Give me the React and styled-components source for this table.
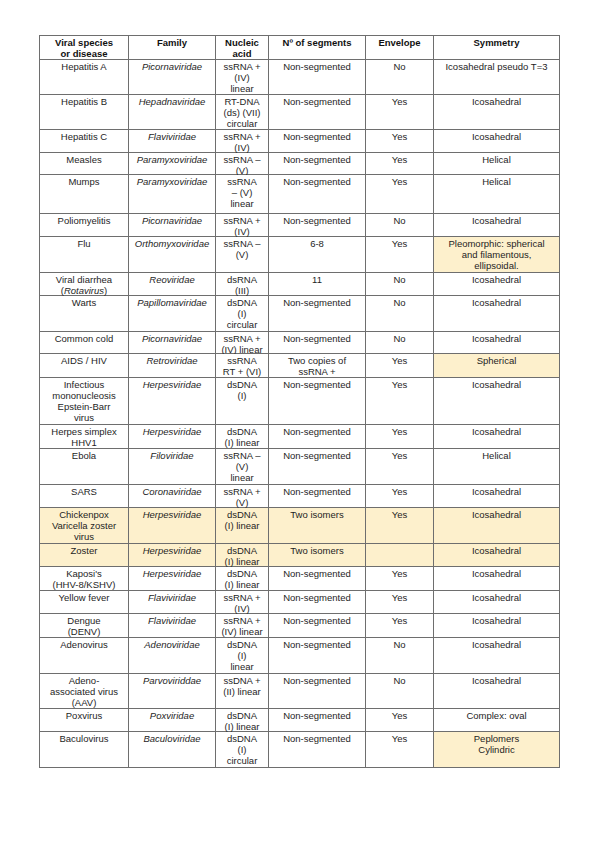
import React from "react";
import styled, { createGlobalStyle } from "styled-components";

const Global = createGlobalStyle`
  html, body { margin: 0; padding: 0; background: #ffffff; }
  body { font-family: "Liberation Sans", Arial, sans-serif; }
`;

const COLS = [89, 87, 53, 97, 68, 126];
const HEADER_H = 24;

const Page = styled.div`
  width: 599px;
  min-height: 848px;
  box-sizing: border-box;
  padding: 35px 0 0 39px;
  background: #ffffff;
`;

const Sheet = styled.div`
  display: grid;
  grid-template-columns: ${(p) => p.$cols};
  grid-template-rows: ${(p) => p.$rows};
  width: max-content;
  border-top: 1px solid #6e6e6e;
  border-left: 1px solid #6e6e6e;
`;

const Cell = styled.div`
  box-sizing: border-box;
  border-right: 1px solid #6e6e6e;
  border-bottom: 1px solid #6e6e6e;
  background: ${(p) => (p.$hl ? "#fdf0cc" : "#ffffff")};
  padding: 0.5px 1px 0;
  font-size: 9.5px;
  line-height: 11px;
  color: #1e1e1e;
  text-align: center;
  white-space: pre-line;
  overflow: visible;
  font-style: ${(p) => (p.$italic ? "italic" : "normal")};
`;

const HeadCell = styled(Cell)`
  font-weight: bold;
  color: #111111;
  padding-top: 1px;
`;

const Line = styled.div`
  display: block;
`;

const Em = styled.span`
  font-style: italic;
`;

const rows = [
  { h: 35, c: ["Hepatitis A", "Picornaviridae", "ssRNA +\n(IV)\nlinear", "Non-segmented", "No", "Icosahedral pseudo T=3"] },
  { h: 35, c: ["Hepatitis B", "Hepadnaviridae", "RT-DNA\n(ds) (VII)\ncircular", "Non-segmented", "Yes", "Icosahedral"] },
  { h: 23, c: ["Hepatitis C", "Flaviviridae", "ssRNA +\n(IV)", "Non-segmented", "Yes", "Icosahedral"] },
  { h: 22, c: ["Measles", "Paramyxoviridae", "ssRNA –\n(V)", "Non-segmented", "Yes", "Helical"] },
  { h: 39, c: ["Mumps", "Paramyxoviridae", "ssRNA\n– (V)\nlinear", "Non-segmented", "Yes", "Helical"] },
  { h: 23, c: ["Poliomyelitis", "Picornaviridae", "ssRNA +\n(IV)", "Non-segmented", "No", "Icosahedral"] },
  { h: 36, c: ["Flu", "Orthomyxoviridae", "ssRNA –\n(V)", "6-8", "Yes", "Pleomorphic: spherical\nand filamentous,\nellipsoidal."], hl: [5] },
  {
    h: 23,
    c: [
      <>
        <Line>Viral diarrhea</Line>
        <Line>
          (<Em>Rotavirus</Em>)
        </Line>
      </>,
      "Reoviridae",
      "dsRNA\n(III)",
      "11",
      "No",
      "Icosahedral",
    ],
  },
  { h: 36, c: ["Warts", "Papillomaviridae", "dsDNA\n(I)\ncircular", "Non-segmented", "No", "Icosahedral"] },
  { h: 22, c: ["Common cold", "Picornaviridae", "ssRNA +\n(IV) linear", "Non-segmented", "No", "Icosahedral"] },
  { h: 24, c: ["AIDS / HIV", "Retroviridae", "ssRNA\nRT + (VI)", "Two copies of\nssRNA +", "Yes", "Spherical"], hl: [5] },
  { h: 47, c: ["Infectious\nmononucleosis\nEpstein-Barr\nvirus", "Herpesviridae", "dsDNA\n(I)", "Non-segmented", "Yes", "Icosahedral"] },
  { h: 24, c: ["Herpes simplex\nHHV1", "Herpesviridae", "dsDNA\n(I) linear", "Non-segmented", "Yes", "Icosahedral"] },
  { h: 36, c: ["Ebola", "Filoviridae", "ssRNA –\n(V)\nlinear", "Non-segmented", "Yes", "Helical"] },
  { h: 23, c: ["SARS", "Coronaviridae", "ssRNA +\n(V)", "Non-segmented", "Yes", "Icosahedral"] },
  { h: 36, c: ["Chickenpox\nVaricella zoster\nvirus", "Herpesviridae", "dsDNA\n(I) linear", "Two isomers", "Yes", "Icosahedral"], hl: [0, 1, 2, 3, 4, 5] },
  { h: 23, c: ["Zoster", "Herpesviridae", "dsDNA\n(I) linear", "Two isomers", "", "Icosahedral"], hl: [0, 1, 2, 3, 4, 5] },
  { h: 24, c: ["Kaposi's\n(HHV-8/KSHV)", "Herpesviridae", "dsDNA\n(I) linear", "Non-segmented", "Yes", "Icosahedral"] },
  { h: 23, c: ["Yellow fever", "Flaviviridae", "ssRNA +\n(IV)", "Non-segmented", "Yes", "Icosahedral"] },
  { h: 24, c: ["Dengue\n(DENV)", "Flaviviridae", "ssRNA +\n(IV) linear", "Non-segmented", "Yes", "Icosahedral"] },
  { h: 36, c: ["Adenovirus", "Adenoviridae", "dsDNA\n(I)\nlinear", "Non-segmented", "No", "Icosahedral"] },
  { h: 35, c: ["Adeno-\nassociated virus\n(AAV)", "Parvoviriddae", "ssDNA +\n(II) linear", "Non-segmented", "No", "Icosahedral"] },
  { h: 23, c: ["Poxvirus", "Poxviridae", "dsDNA\n(I) linear", "Non-segmented", "Yes", "Complex: oval"] },
  { h: 36, c: ["Baculovirus", "Baculoviridae", "dsDNA\n(I)\ncircular", "Non-segmented", "Yes", "Peplomers\nCylindric"], hl: [5] },
];

const headers = ["Viral species\nor disease", "Family", "Nucleic\nacid", "Nº of segments", "Envelope", "Symmetry"];

export default function App() {
  const colTemplate = COLS.map((w) => `${w}px`).join(" ");
  const rowTemplate = [HEADER_H, ...rows.map((r) => r.h)].map((h) => `${h}px`).join(" ");
  return (
    <Page>
      <Global />
      <Sheet $cols={colTemplate} $rows={rowTemplate}>
        {headers.map((h, i) => (
          <HeadCell key={`h${i}`}>{h}</HeadCell>
        ))}
        {rows.map((r, ri) =>
          r.c.map((c, ci) => (
            <Cell key={`${ri}-${ci}`} $italic={ci === 1} $hl={r.hl ? r.hl.includes(ci) : false}>
              {c}
            </Cell>
          ))
        )}
      </Sheet>
    </Page>
  );
}
